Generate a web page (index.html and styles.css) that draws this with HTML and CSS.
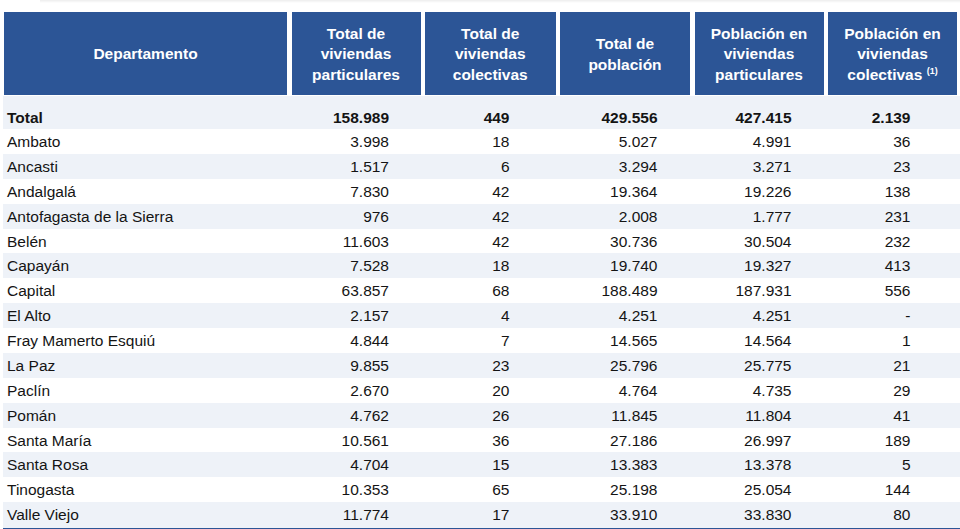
FILE: index.html
```html
<!DOCTYPE html>
<html lang="es">
<head>
<meta charset="utf-8">
<title>Departamentos</title>
<link rel="stylesheet" href="styles.css">
</head>
<body>
<div class="topshade"></div>
<div class="table">
  <div class="head">
    <div class="hcell"><span>Departamento</span></div>
    <div class="hcell"><span>Total de<br>viviendas<br>particulares</span></div>
    <div class="hcell"><span>Total de<br>viviendas<br>colectivas</span></div>
    <div class="hcell"><span>Total de<br>población</span></div>
    <div class="hcell"><span>Población en<br>viviendas<br>particulares</span></div>
    <div class="hcell"><span>Población en<br>viviendas<br>colectivas <sup class="note">(1)</sup></span></div>
  </div>
  <div class="row total alt"><div class="name">Total</div><div class="n c2">158.989</div><div class="n c3">449</div><div class="n c4">429.556</div><div class="n c5">427.415</div><div class="n c6">2.139</div></div>
  <div class="row"><div class="name">Ambato</div><div class="n c2">3.998</div><div class="n c3">18</div><div class="n c4">5.027</div><div class="n c5">4.991</div><div class="n c6">36</div></div>
  <div class="row alt"><div class="name">Ancasti</div><div class="n c2">1.517</div><div class="n c3">6</div><div class="n c4">3.294</div><div class="n c5">3.271</div><div class="n c6">23</div></div>
  <div class="row"><div class="name">Andalgalá</div><div class="n c2">7.830</div><div class="n c3">42</div><div class="n c4">19.364</div><div class="n c5">19.226</div><div class="n c6">138</div></div>
  <div class="row alt"><div class="name">Antofagasta de la Sierra</div><div class="n c2">976</div><div class="n c3">42</div><div class="n c4">2.008</div><div class="n c5">1.777</div><div class="n c6">231</div></div>
  <div class="row"><div class="name">Belén</div><div class="n c2">11.603</div><div class="n c3">42</div><div class="n c4">30.736</div><div class="n c5">30.504</div><div class="n c6">232</div></div>
  <div class="row alt"><div class="name">Capayán</div><div class="n c2">7.528</div><div class="n c3">18</div><div class="n c4">19.740</div><div class="n c5">19.327</div><div class="n c6">413</div></div>
  <div class="row"><div class="name">Capital</div><div class="n c2">63.857</div><div class="n c3">68</div><div class="n c4">188.489</div><div class="n c5">187.931</div><div class="n c6">556</div></div>
  <div class="row alt"><div class="name">El Alto</div><div class="n c2">2.157</div><div class="n c3">4</div><div class="n c4">4.251</div><div class="n c5">4.251</div><div class="n c6">-</div></div>
  <div class="row"><div class="name">Fray Mamerto Esquiú</div><div class="n c2">4.844</div><div class="n c3">7</div><div class="n c4">14.565</div><div class="n c5">14.564</div><div class="n c6">1</div></div>
  <div class="row alt"><div class="name">La Paz</div><div class="n c2">9.855</div><div class="n c3">23</div><div class="n c4">25.796</div><div class="n c5">25.775</div><div class="n c6">21</div></div>
  <div class="row"><div class="name">Paclín</div><div class="n c2">2.670</div><div class="n c3">20</div><div class="n c4">4.764</div><div class="n c5">4.735</div><div class="n c6">29</div></div>
  <div class="row alt"><div class="name">Pomán</div><div class="n c2">4.762</div><div class="n c3">26</div><div class="n c4">11.845</div><div class="n c5">11.804</div><div class="n c6">41</div></div>
  <div class="row"><div class="name">Santa María</div><div class="n c2">10.561</div><div class="n c3">36</div><div class="n c4">27.186</div><div class="n c5">26.997</div><div class="n c6">189</div></div>
  <div class="row alt"><div class="name">Santa Rosa</div><div class="n c2">4.704</div><div class="n c3">15</div><div class="n c4">13.383</div><div class="n c5">13.378</div><div class="n c6">5</div></div>
  <div class="row"><div class="name">Tinogasta</div><div class="n c2">10.353</div><div class="n c3">65</div><div class="n c4">25.198</div><div class="n c5">25.054</div><div class="n c6">144</div></div>
  <div class="row alt last"><div class="name">Valle Viejo</div><div class="n c2">11.774</div><div class="n c3">17</div><div class="n c4">33.910</div><div class="n c5">33.830</div><div class="n c6">80</div></div>
</div>
</body>
</html>
```

FILE: styles.css
```css
html, body {
  margin: 0;
  padding: 0;
  background: #ffffff;
  width: 960px;
  height: 529px;
  overflow: hidden;
}
body {
  font-family: "Liberation Sans", Arial, sans-serif;
  color: #141414;
  position: relative;
}
.topshade {
  position: absolute;
  left: 40px;
  right: 0;
  top: 0;
  height: 3px;
  background: linear-gradient(to bottom, rgba(0,0,0,0.07), rgba(0,0,0,0));
}
.table {
  padding-top: 12px;
  padding-left: 4px;
}
.head,
.row {
  display: grid;
  grid-template-columns: 283px 129px 130.5px 130px 129px 129px;
  column-gap: 4.5px;
}
.head {
  height: 83px;
  margin-bottom: 1px;
}
.hcell {
  background: #2c5596;
  color: #ffffff;
  font-weight: bold;
  font-size: 15.5px;
  line-height: 20.5px;
  text-align: center;
  display: flex;
  align-items: center;
  justify-content: center;
  padding-top: 2px;
  box-sizing: border-box;
}
.note {
  font-size: 9px;
  line-height: 0;
  vertical-align: 6px;
}
.row {
  height: 24.875px;
  box-sizing: border-box;
  padding-top: 2px;
  line-height: 22.875px;
  font-size: 15.5px;
  margin-left: -1px;
  padding-left: 1px;
  width: 957px;
}
.row.alt {
  background: #eef2f8;
}
.row.total {
  height: 33px;
  padding-top: 10px;
  line-height: 23px;
  font-weight: bold;
}
.row.last {
  height: 27.375px;
  border-bottom: 2.5px solid #2c5596;
}
.name {
  padding-left: 3px;
  white-space: nowrap;
}
.n {
  text-align: right;
  white-space: nowrap;
}
.c2 { padding-right: 31.5px; }
.c3 { padding-right: 46px; }
.c4 { padding-right: 32.5px; }
.c5 { padding-right: 32px; }
.c6 { padding-right: 46.5px; }
```
